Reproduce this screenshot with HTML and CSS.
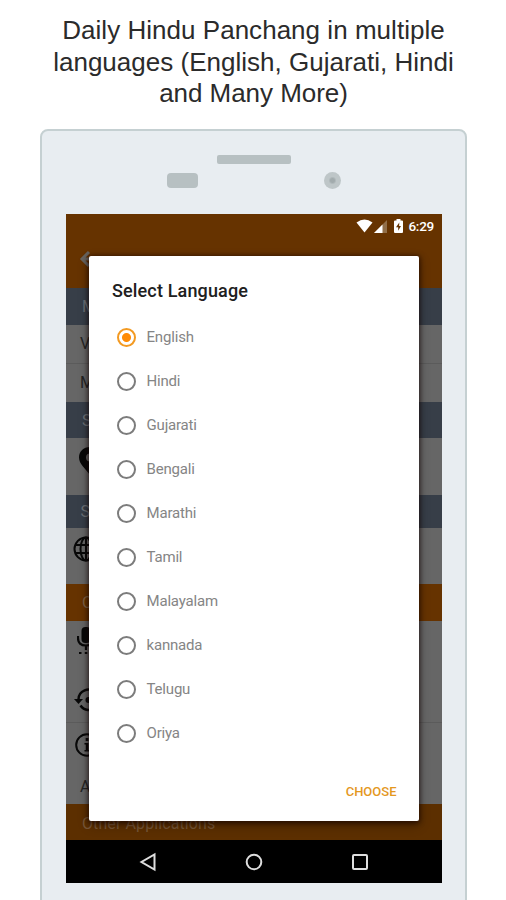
FILE: index.html
```html
<!DOCTYPE html>
<html lang="en">
<head>
<meta charset="utf-8">
<title>Daily Hindu Panchang</title>
<link rel="stylesheet" href="styles.css">
</head>
<body>
<h1 class="headline"><span class="l1">Daily Hindu Panchang in multiple</span><br><span class="l2">languages (English, Gujarati, Hindi</span><br><span class="l3">and Many More)</span></h1>
<div class="phone">
  <div class="speaker"></div>
  <div class="sensors"><i class="sensor"></i><i class="camera"></i></div>
  <div class="screen">
    <div class="appbar">
      <div class="status">
        <svg width="17" height="14" viewBox="0 0 17 14"><path d="M.5 3.5Q8.500-2.500 16.500 3.500L8.500 13.500Z" fill="#fff"/></svg>
        <svg width="13" height="13" viewBox="0 0 13 13"><path d="M0 13L13 0V13Z" fill="#916f49"/><path d="M0 13L8.500 4.500V13Z" fill="#fff"/></svg>
        <svg class="battery" width="9" height="14" viewBox="0 0 9 14"><path d="M2.500 0H6.500V1.500H8Q9 1.500 9 2.500V13Q9 14 8 14H1Q0 14 0 13V2.500Q0 1.500 1 1.500H2.500Z" fill="#fff"/><path d="M5.300 3.500L2 8.200H4.200V11.800L7 7H5.100Z" fill="#663300"/></svg>
        <span class="time">6:29</span>
      </div>
      <svg class="back" width="20" height="18" viewBox="0 0 20 18"><path d="M10 2L3 9L10 16M3.500 9H20" fill="none" stroke="#686460" stroke-width="3"/></svg>
    </div>
    <div class="section s1">M</div>
    <div class="row r1 line">V</div>
    <div class="row r2">M</div>
    <div class="section s2">S</div>
    <div class="row r3"><svg width="22" height="28" viewBox="0 0 22 28"><path fill-rule="evenodd" d="M11 0C4.500 0 0 4.500 0 10.500C0 17 6 21 11 28C16 21 22 17 22 10.500C22 4.500 17.500 0 11 0ZM11 6.500A4 4 0 1 1 11 14.500A4 4 0 1 1 11 6.500Z"/></svg></div>
    <div class="section s3">S</div>
    <div class="row r4"><svg class="globe" width="26" height="26" viewBox="0 0 26 26"><circle cx="13" cy="13" r="11.500"/><ellipse cx="13" cy="13" rx="5.500" ry="11.500"/><path d="M13 1V25M2 9H24M2 17H24"/></svg></div>
    <div class="section orange s4">O</div>
    <div class="row r5"><svg width="18" height="30" viewBox="0 0 18 30"><rect x="4.500" width="9" height="16" rx="4"/><path d="M1 9V11Q1 18.500 9 18.500T17 11V9M9 18V23" fill="none" stroke="#080808" stroke-width="2.200"/><path d="M2 25h2.500v2H2zM7.800 25h2.500v2H7.800zM13.500 25H16v2h-2.500z"/></svg></div>
    <div class="row r6 line"><svg width="28" height="24" viewBox="0 0 28 24"><path d="M4.500 12A10 10 0 0 1 22 5M6.500 17.500A10 10 0 0 0 22 19" fill="none" stroke="#080808" stroke-width="2.500" stroke-dasharray="20 2 4 2"/><path d="M0 11H9L4.500 16Z"/><circle cx="14.500" cy="12" r="3"/></svg></div>
    <div class="row r7"><svg width="24" height="24" viewBox="0 0 24 24"><circle cx="12" cy="12" r="10.800" fill="none" stroke="#080808" stroke-width="2"/><path d="M10.700 5h2.800v3h-2.800zM9.500 10h4v7H15v1.500H9.500V17h1.300v-5.500H9.500z"/></svg></div>
    <div class="row r8">A</div>
    <div class="section orange s5">Other Applications</div>
    <div class="nav">
      <svg width="18" height="20" viewBox="0 0 18 20"><path d="M15.500 2.500V17.500L2.500 10Z"/></svg>
      <svg width="18" height="20" viewBox="0 0 18 20"><circle cx="9" cy="10" r="7.300"/></svg>
      <svg width="18" height="20" viewBox="0 0 18 20"><rect x="2" y="3" width="14" height="14" rx="1"/></svg>
    </div>
    <div class="dialog">
      <h2>Select Language</h2>
      <div class="options">
        <div class="option on"><i></i>English</div>
        <div class="option"><i></i>Hindi</div>
        <div class="option"><i></i>Gujarati</div>
        <div class="option"><i></i>Bengali</div>
        <div class="option"><i></i>Marathi</div>
        <div class="option"><i></i>Tamil</div>
        <div class="option"><i></i>Malayalam</div>
        <div class="option"><i></i>kannada</div>
        <div class="option"><i></i>Telugu</div>
        <div class="option"><i></i>Oriya</div>
      </div>
      <div class="choose">CHOOSE</div>
    </div>
  </div>
</div>
</body>
</html>
```
FILE: styles.css
```css
* { box-sizing: border-box; }
body { margin: 0; height: 900px; overflow: hidden; background: #fff; font-family: Roboto, sans-serif; }
svg { display: block; flex: none; }
.headline { margin: 0; height: 129px; padding: 15px 0 0 1px; text-align: center; white-space: nowrap; font: 400 26px/31.500px "Liberation Sans", sans-serif; color: #2b2b2b; }
.l1 { letter-spacing: .03px; }
.l2 { letter-spacing: .01px; }
.l3 { letter-spacing: -.05px; }
.phone { width: 427px; height: 800px; margin-left: 40px; border: 2px solid #c5d0d2; border-radius: 8px; background: #e8edf1; padding-top: 24px; }
.speaker { width: 74px; height: 9px; margin-left: 175px; border-radius: 2px; background: #b7c0c2; }
.sensors { display: flex; align-items: center; height: 16px; margin: 8px 0 26px 125px; }
.sensor { width: 31px; height: 15px; border-radius: 4px; background: #b7c0c2; }
.camera { width: 17px; height: 17px; margin-left: 126px; border-radius: 50%; background: radial-gradient(circle, #a2abad 0 2px, #bec6c8 4px); }
.screen { position: relative; display: flex; flex-direction: column; width: 376px; height: 669px; margin-left: 23.500px; background: #666; overflow: hidden; }
.screen > * { flex: none; }
.appbar { height: 74px; background: #663300; }
.status { display: flex; align-items: center; height: 24px; padding-left: 290px; color: #fff; }
.status svg + svg { margin-left: 1px; }
.status svg.battery { margin-left: 7px; }
.time { margin-left: 6px; font-size: 13.500px; font-weight: 500; letter-spacing: -.3px; }
.back { margin: 12px 0 0 13px; }
.section { display: flex; align-items: center; padding-left: 16.500px; background: #373e48; color: #6c7076; font-size: 16px; }
.section.orange { background: #663300; color: #7f6145; }
.s1 { height: 37px; }
.s2 { height: 36px; }
.s3 { height: 33px; padding-left: 15px; }
.s4 { height: 37px; }
.s5 { height: 36px; letter-spacing: .1px; }
.screen .s5 { background: #5c2f00; color: #775638; align-items: flex-start; padding-top: 10px; }
.row { display: flex; align-items: center; padding-left: 14.500px; color: #242424; font-size: 16px; }
.row svg { fill: #080808; }
.row .globe { fill: none; stroke: #080808; stroke-width: 2; }
.line { border-bottom: 1px solid #5b5b5b; }
.r1, .r2 { height: 38.500px; }
.r3 { height: 57px; padding-left: 13px; padding-bottom: 11px; }
.r4 { height: 56px; padding: 0 0 14px 7px; }
.r5 { height: 57px; padding: 6px 0 12px 11px; align-items: flex-start; }
.r6 { height: 45px; padding-left: 8px; }
.r7 { height: 46px; padding-left: 9px; padding-bottom: 2px; }
.r8 { height: 35px; }
.nav { display: flex; align-items: center; gap: 88px; height: 43px; padding-left: 73.500px; background: #000; }
.nav svg { fill: none; stroke: #dedede; stroke-width: 2; }
.dialog { position: absolute; left: 23.500px; top: 42px; width: 330px; height: 565px; padding: 24px 22.500px 0 23px; background: #fff; border-radius: 2px; box-shadow: 0 1px 5px 1px rgba(20, 0, 0, .65), 0 4px 12px rgba(0, 0, 0, .3); }
.dialog h2 { margin: 0; height: 35px; font-size: 18px; line-height: 21px; font-weight: 500; letter-spacing: .15px; color: #202020; }
.option { display: flex; align-items: center; height: 44px; padding-left: 4.500px; gap: 11px; font-size: 15px; letter-spacing: -.18px; color: #858585; }
.option i { display: block; width: 19px; height: 19px; border: 2px solid #7c7c7c; border-radius: 50%; }
.option.on i { border-color: #f39a22; background: radial-gradient(circle, #ff8b05 0 4px, #fff 5px); }
.choose { margin-top: 28px; text-align: right; font-size: 13px; line-height: 18px; font-weight: 500; color: #e4981f; }
```
